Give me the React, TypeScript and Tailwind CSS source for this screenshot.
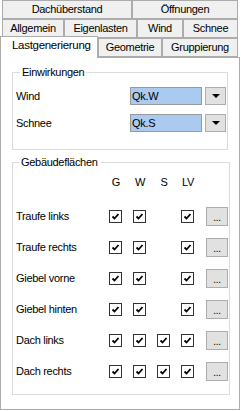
const rows = [
  { name: "Traufe links", checks: [true, true, false, true] },
  { name: "Traufe rechts", checks: [true, true, false, true] },
  { name: "Giebel vorne", checks: [true, true, false, true] },
  { name: "Giebel hinten", checks: [true, true, false, true] },
  { name: "Dach links", checks: [true, true, true, true] },
  { name: "Dach rechts", checks: [true, true, true, true] },
];

function Tab({ label, width }: { label: string; width: string }) {
  return (
    <div
      className={`${width} h-full flex items-center justify-center border border-[#acacac] bg-[#f0f0f0] leading-none`}
    >
      {label}
    </div>
  );
}

function CheckBox({ checked }: { checked: boolean }) {
  if (!checked) return null;
  return (
    <div className="w-[13px] h-[13px] border border-[#333333] bg-white flex items-center justify-center">
      <svg width="9" height="9" viewBox="0 0 9 9">
        <polyline points="1.5,4.5 3.5,6.5 7.5,2" fill="none" stroke="#000" strokeWidth="1.8" />
      </svg>
    </div>
  );
}

function DropButton() {
  return (
    <div className="w-[21px] h-[18px] border border-[#adadad] bg-[#e1e1e1] flex items-center justify-center">
      <svg width="8" height="4" viewBox="0 0 8 4">
        <polygon points="0,0 8,0 4,4" fill="#000" />
      </svg>
    </div>
  );
}

function ComboRow({ label, value }: { label: string; value: string }) {
  return (
    <div className="flex items-center h-[18px]">
      <span className="w-[116px] pl-[2px]">{label}</span>
      <div className="w-[72px] h-[18px] border border-[#9a9a9a] bg-[#abcaf0] flex items-center pl-[1px]">
        {value}
      </div>
      <div className="ml-[3px]">
        <DropButton />
      </div>
    </div>
  );
}

export default function App() {
  return (
    <div className="w-[241px] h-[411px] bg-white text-[11px] tracking-[-0.3px] text-black font-['Liberation_Sans',Arial,sans-serif]">
      {/* tab rows */}
      <div className="flex pl-[2px] h-[19px]">
        <Tab label="Dachüberstand" width="w-[130px]" />
        <Tab label="Öffnungen" width="w-[106px]" />
      </div>
      <div className="flex pl-[2px] h-[19px]">
        <Tab label="Allgemein" width="w-[62px]" />
        <Tab label="Eigenlasten" width="w-[73px]" />
        <Tab label="Wind" width="w-[46px]" />
        <Tab label="Schnee" width="w-[55px]" />
      </div>
      <div className="flex h-[19px]">
        <div className="relative z-10 w-[98px] h-[22px] -mt-[2px] flex items-start pt-[3px] pl-[11px] border border-b-0 border-[#acacac] bg-white leading-none text-[11.5px]">
          Lastgenerierung
        </div>
        <Tab label="Geometrie" width="w-[64px]" />
        <Tab label="Gruppierung" width="w-[76px]" />
      </div>

      {/* panel */}
      <div className="w-[240px] h-[353px] border border-[#acacac] bg-white px-[11px]">
        <fieldset className="mt-[7px] h-[85px] border border-[#dcdcdc] px-[1px]">
          <legend className="ml-[6px] px-[2px] leading-[14px]">Einwirkungen</legend>
          <div className="mt-[8px] flex flex-col gap-[9px]">
            <ComboRow label="Wind" value="Qk.W" />
            <ComboRow label="Schnee" value="Qk.S" />
          </div>
        </fieldset>

        <fieldset className="mt-[5px] h-[240px] border border-[#dcdcdc] px-[1px]">
          <legend className="ml-[5px] px-[2px] leading-[14px]">Gebäudeflächen</legend>
          <div className="mt-[3px] h-[20px] flex items-center pl-[95px]">
            {["G", "W", "S", "LV"].map((h) => (
              <div key={h} className="w-[24px] text-center pr-[10px] pl-[0px]">
                <span className="inline-block w-[13px] text-center">{h}</span>
              </div>
            ))}
          </div>
          <div className="mt-[9px]">
            {rows.map((r) => (
              <div key={r.name} className="flex items-center h-[31px] pl-[2px]">
                <span className="w-[93px]">{r.name}</span>
                {r.checks.map((c, i) => (
                  <div key={i} className="w-[24px]">
                    <CheckBox checked={c} />
                  </div>
                ))}
                <div className="ml-[1px] w-[22px] h-[19px] border border-[#adadad] bg-[#e1e1e1] flex items-end justify-center pb-[2px] leading-none text-[10px]">
                  ...
                </div>
              </div>
            ))}
          </div>
        </fieldset>
      </div>
    </div>
  );
}
